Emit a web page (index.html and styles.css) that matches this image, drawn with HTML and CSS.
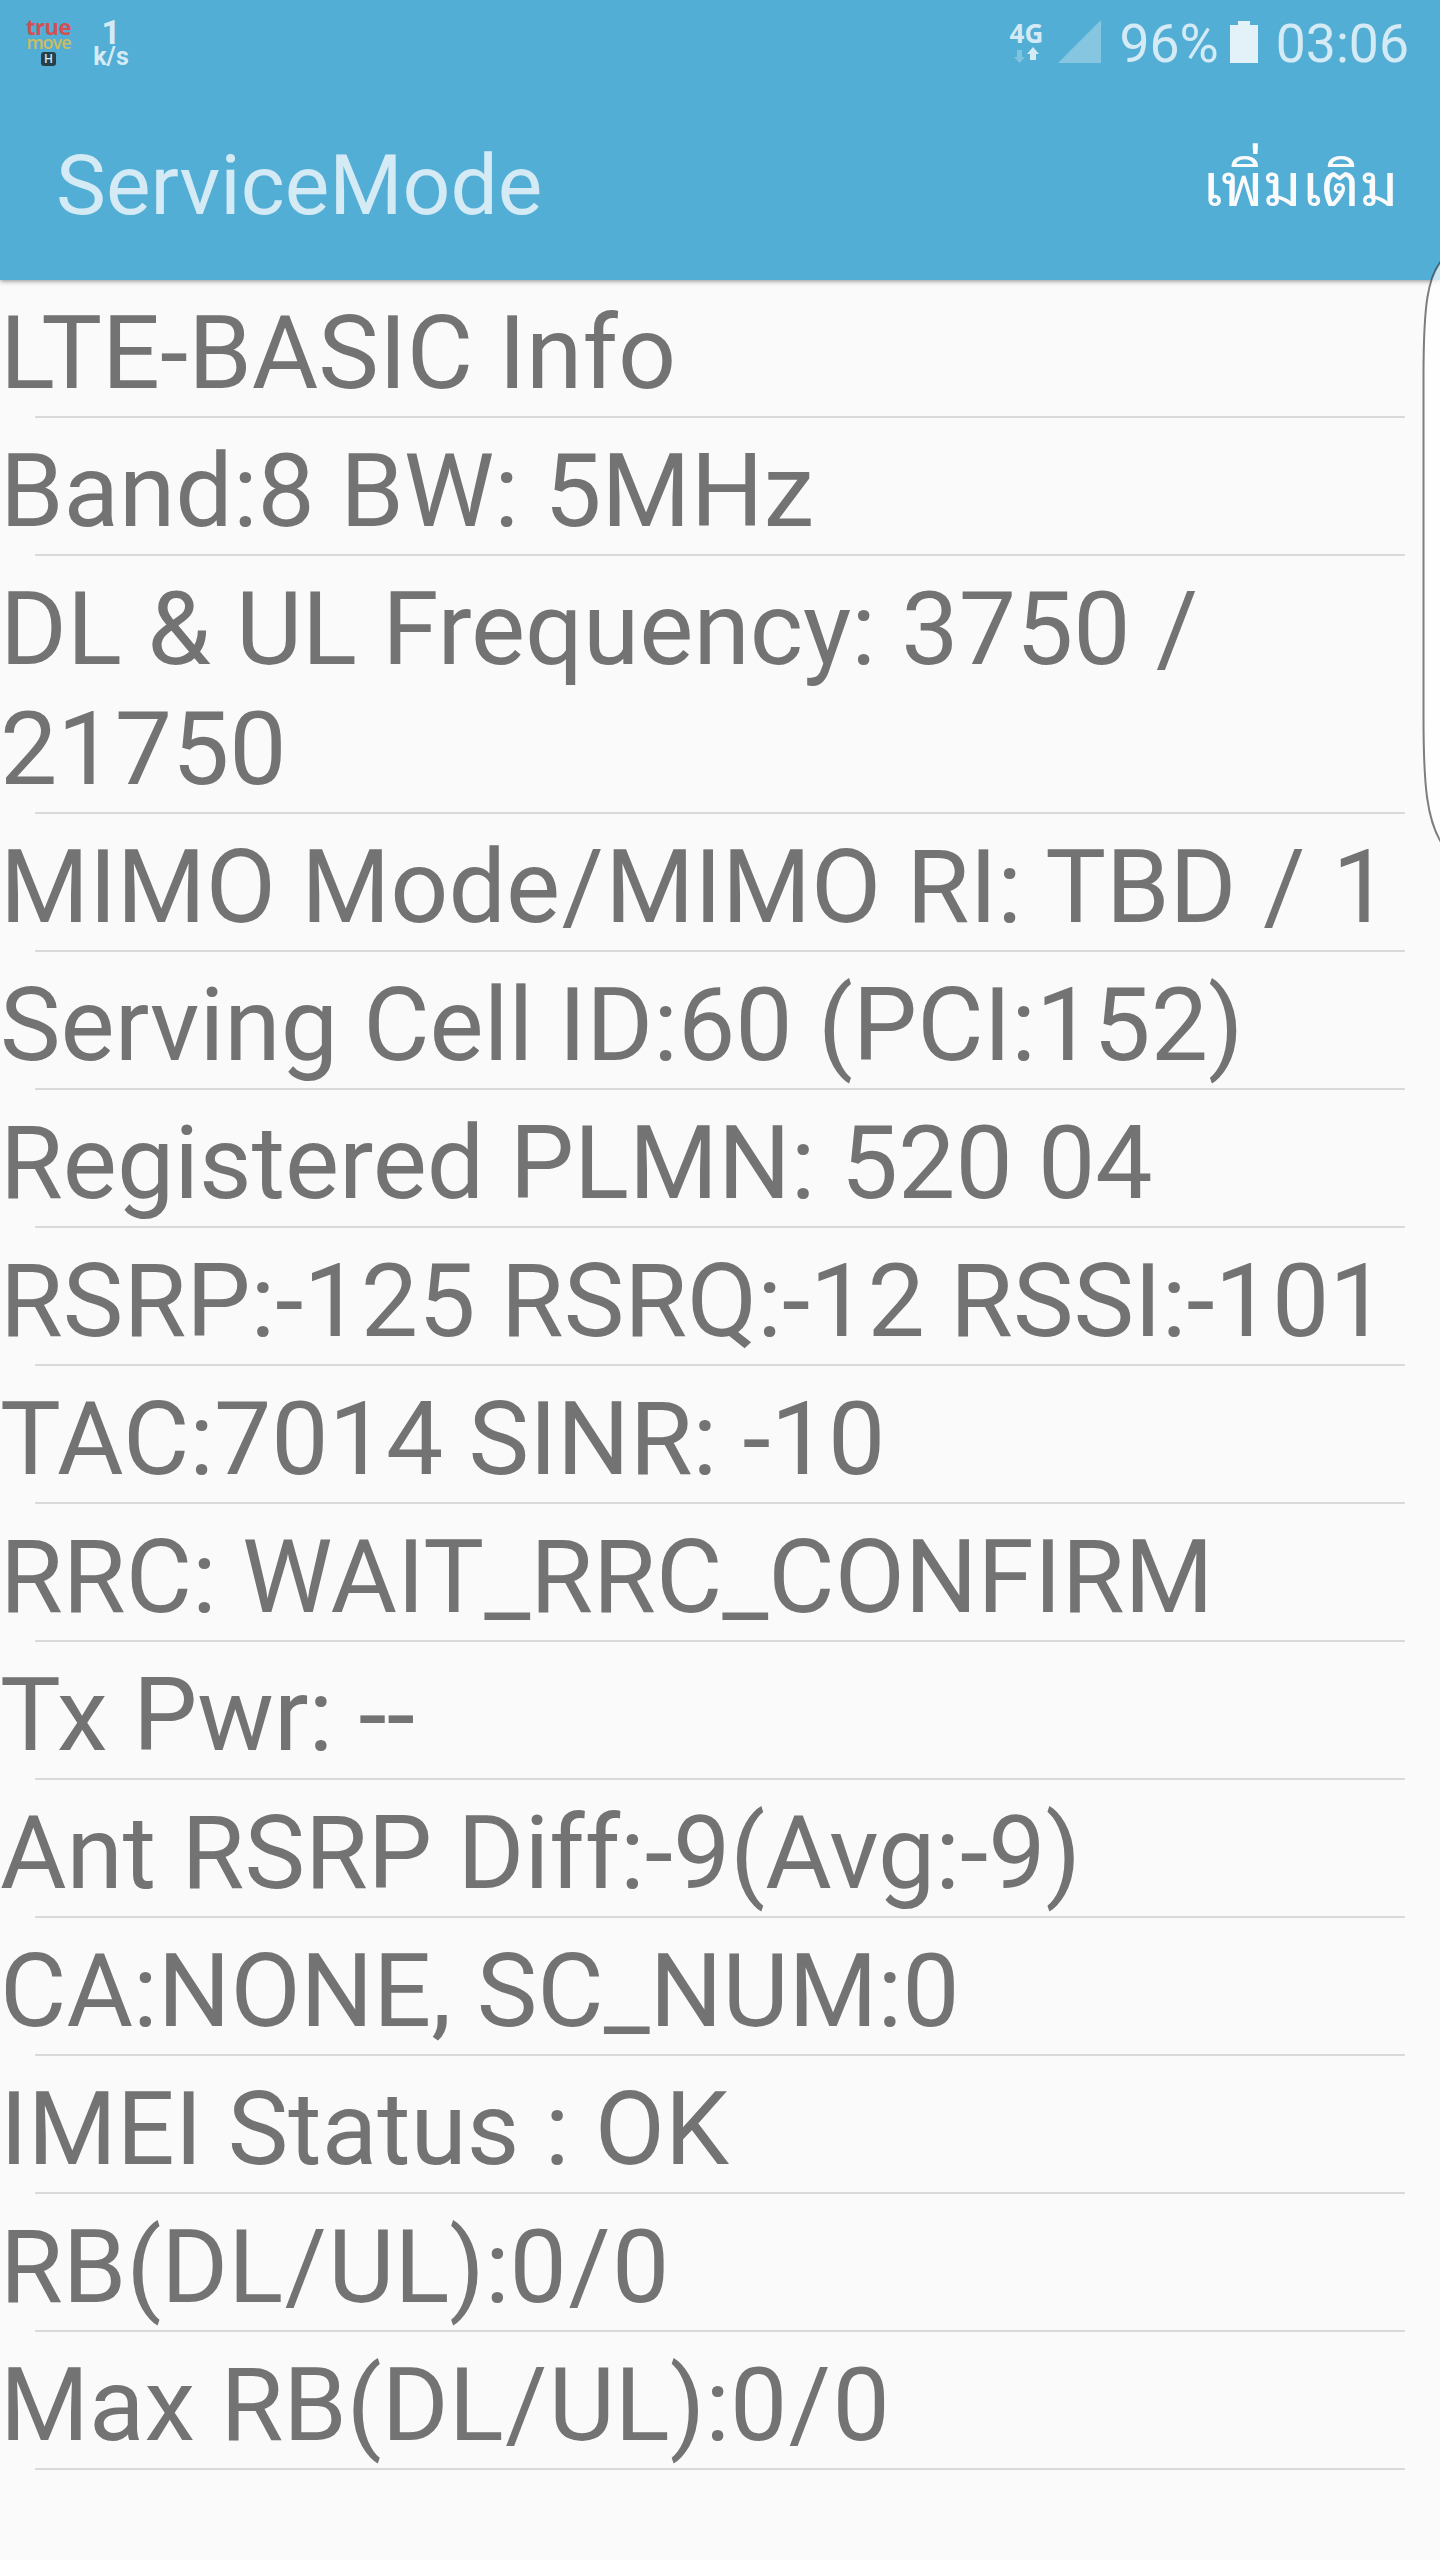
FILE: index.html
```
<!DOCTYPE html>
<html lang="th">
<head>
    <meta charset="UTF-8">
    <meta name="viewport" content="width=device-width, initial-scale=1.0">
    <title>ServiceMode</title>
    <link rel="stylesheet" href="styles.css">
</head>
<body>
    <!-- Header Section -->
    <header class="header">
        <div class="status-bar">
            <div class="status-left">
                <div class="carrier">
                    <span class="carrier-true">true</span>
                    <span class="carrier-move">move</span>
                    <span class="carrier-h">H</span>
                </div>
                <div class="net-speed">
                    <span class="speed-value">1</span>
                    <span class="speed-unit">k/s</span>
                </div>
            </div>
            <div class="status-right">
                <div class="network">
                    <span class="network-type">4G</span>
                    <svg class="network-arrows" viewBox="0 0 26 16">
                        <path class="arrow-down" d="M4 3h5v7h3L6.5 16 1 10h3z"/>
                        <path class="arrow-up" d="M17 13h6V7h3L20 0l-6 7h3z"/>
                    </svg>
                </div>
                <svg class="signal" viewBox="0 0 43 43">
                    <path d="M43 0v43H0z"/>
                </svg>
                <span class="battery-text">96%</span>
                <svg class="battery" viewBox="0 0 28 42">
                    <path d="M8 0h12v4h8v38H0V4h8z"/>
                </svg>
                <span class="clock">03:06</span>
            </div>
        </div>
        <div class="action-bar">
            <h1 class="title">ServiceMode</h1>
            <button class="more-btn">เพิ่มเติม</button>
        </div>
    </header>

    <!-- Info List -->
    <ul class="info-list">
        <li>LTE-BASIC Info</li>
        <li>Band:8 BW: 5MHz</li>
        <li>DL &amp; UL Frequency: 3750 / 21750</li>
        <li>MIMO Mode<span class="slash">/</span>MIMO RI: TBD <span class="slash">/</span> 1</li>
        <li>Serving Cell ID:60 (PCI:152)</li>
        <li>Registered PLMN: 520 04</li>
        <li>RSRP:-125 RSRQ:-12 RSSI:-101</li>
        <li>TAC:7014 SINR: -10</li>
        <li>RRC: WAIT_RRC_CONFIRM</li>
        <li>Tx Pwr: --</li>
        <li>Ant RSRP Diff:-9(Avg:-9)</li>
        <li>CA:NONE, SC_NUM:0</li>
        <li>IMEI Status : OK</li>
        <li>RB(DL<span class="slash">/</span>UL):0<span class="slash">/</span>0</li>
        <li>Max RB(DL<span class="slash">/</span>UL):0<span class="slash">/</span>0</li>
    </ul>

    <!-- Edge panel handle -->
    <svg class="edge-handle" viewBox="0 0 20 590">
        <path d="M22 3C8 20 3.5 45 3.5 120V460C3.5 530 7 563 22 587"/>
    </svg>
</body>
</html>
```

FILE: styles.css
```
* {
    margin: 0;
    padding: 0;
    box-sizing: border-box;
}

body {
    font-family: Roboto, "Noto Sans", sans-serif;
    background: #fafafa;
    color: #737373;
    min-height: 100vh;
    position: relative;
    overflow: hidden;
}

.header {
    height: 280px;
    background: #52aed5;
    color: #d4eaf4;
    box-shadow: 0 1px 5px rgba(0, 0, 0, 0.45);
}

/* Status bar */
.status-bar {
    height: 96px;
    display: flex;
    justify-content: space-between;
    padding: 0 31px 0 26px;
}

.status-left,
.status-right {
    display: flex;
    align-items: flex-start;
}

.carrier {
    width: 45px;
    padding-top: 16px;
    display: flex;
    flex-direction: column;
    align-items: center;
    font-family: "Open Sans", sans-serif;
    font-weight: 600;
    font-size: 22px;
    line-height: 16px;
}

.carrier-true {
    color: #d34f55;
    font-weight: 700;
    line-height: 20px;
    letter-spacing: -0.5px;
}

.carrier-move {
    color: #cdbd62;
    font-size: 18px;
    line-height: 13px;
    letter-spacing: -1px;
}

.carrier-h {
    width: 15px;
    height: 14px;
    margin-top: 3px;
    border-radius: 3px;
    background: #263f4b;
    font-size: 12px;
    line-height: 14px;
    text-align: center;
}

.net-speed {
    width: 40px;
    margin-left: 20px;
    padding-top: 18px;
    display: flex;
    flex-direction: column;
    align-items: center;
    font-weight: 700;
}

.speed-value {
    font-size: 33px;
    line-height: 29px;
}

.speed-unit {
    font-size: 25px;
    line-height: 20px;
}

.network {
    width: 36px;
    padding-top: 21px;
    display: flex;
    flex-direction: column;
    align-items: center;
}

.network-type {
    font-family: "Open Sans", sans-serif;
    font-weight: 700;
    font-size: 26px;
    line-height: 24px;
}

.network-arrows {
    width: 26px;
    height: 16px;
    margin-top: 2px;
    fill: #d4eaf4;
}

.arrow-down {
    opacity: 0.35;
}

.signal {
    width: 43px;
    height: 43px;
    margin: 20px 0 0 14px;
    fill: #86c6e0;
}

.battery-text,
.clock {
    font-size: 53.5px;
    line-height: 64px;
    padding-top: 12px;
}

.battery-text {
    margin-left: 18px;
}

.battery {
    width: 28px;
    height: 42px;
    margin: 21px 0 0 11px;
    fill: #e3f2f8;
}

.clock {
    margin-left: 18px;
}

/* Action bar */
.action-bar {
    display: flex;
    justify-content: space-between;
    align-items: center;
    height: 180px;
    padding: 0 42px 0 56px;
}

.title {
    font-size: 84px;
    font-weight: 400;
    line-height: 98px;
}

.more-btn {
    background: transparent;
    border: none;
    color: #fafafa;
    font-family: Roboto, "Noto Sans Thai Looped", Loma, Waree, Garuda, Umpush, sans-serif;
    font-size: 60px;
    line-height: 90px;
}

/* Info list */
.info-list {
    list-style: none;
}

.info-list li {
    font-size: 102px;
    line-height: 120px;
    padding: 13px 0 5px;
    background: linear-gradient(#d9d9d9, #d9d9d9) no-repeat 35px 100% / 1370px 2px;
}

.slash {
    margin: 0 1.5px;
}

/* Edge handle */
.edge-handle {
    position: absolute;
    top: 257px;
    right: 0;
    width: 20px;
    height: 590px;
    fill: rgba(255, 255, 255, 0.7);
    stroke: rgba(0, 0, 0, 0.5);
    stroke-width: 2;
}
```
